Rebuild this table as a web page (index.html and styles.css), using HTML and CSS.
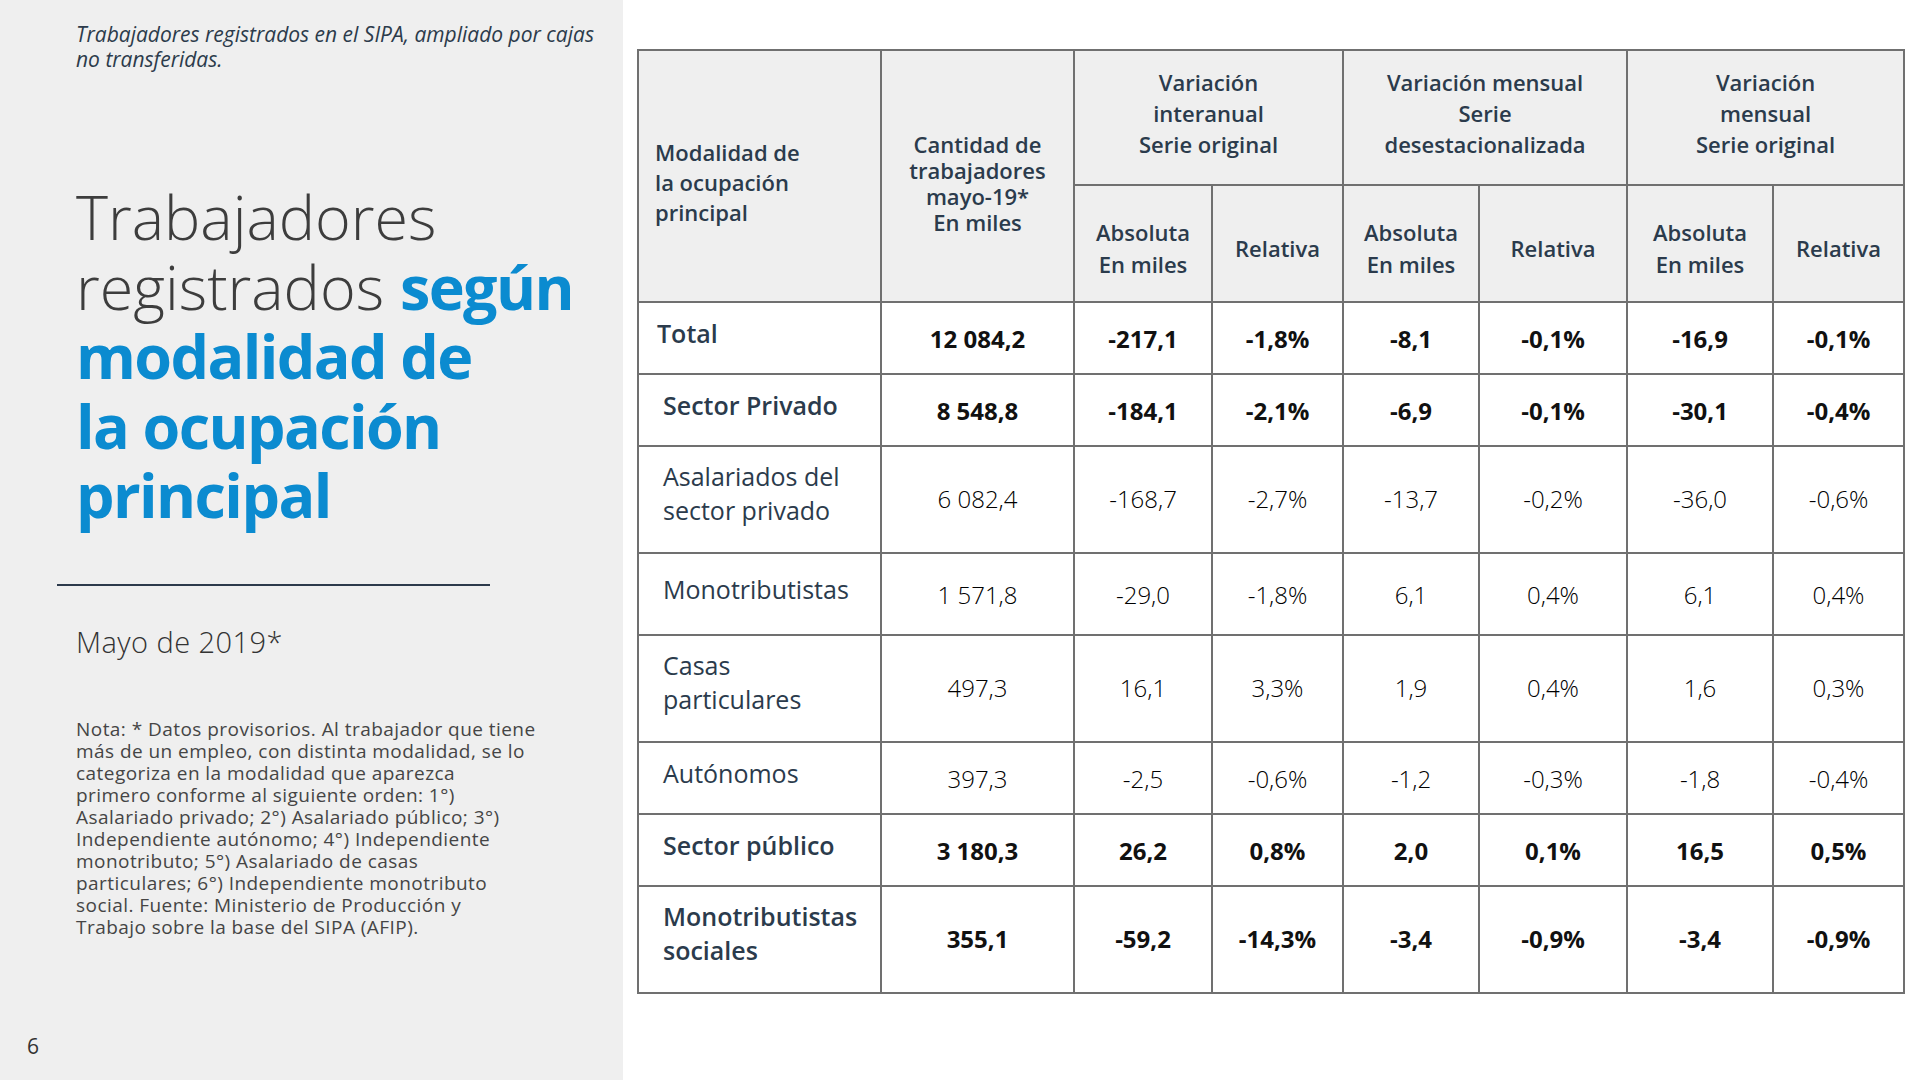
FILE: index.html
```html
<!DOCTYPE html>
<html lang="es">
<head>
<meta charset="utf-8">
<title>Trabajadores registrados según modalidad de la ocupación principal</title>
<link rel="stylesheet" href="styles.css">
</head>
<body>
<div class="slide">
  <aside class="side">
    <p class="subtitle">Trabajadores registrados en el SIPA, ampliado por cajas<br>no transferidas.</p>
    <h1 class="title">Trabajadores<br>registrados <strong>según<br>modalidad de<br>la ocupación<br>principal</strong></h1>
    <hr class="rule">
    <p class="date">Mayo de 2019*</p>
    <p class="note">Nota: * Datos provisorios. Al trabajador que tiene<br>más de un empleo, con distinta modalidad, se lo<br>categoriza en la modalidad que aparezca<br>primero conforme al siguiente orden: 1°)<br>Asalariado privado; 2°) Asalariado público; 3°)<br>Independiente autónomo; 4°) Independiente<br>monotributo; 5°) Asalariado de casas<br>particulares; 6°) Independiente monotributo<br>social. Fuente: Ministerio de Producción y<br>Trabajo sobre la base del SIPA (AFIP).</p>
    <div class="page-num">6</div>
  </aside>
  <main class="content">
    <table class="data">
      <colgroup>
        <col class="c-lab"><col class="c-cant"><col class="c-a1"><col class="c-r1"><col class="c-a2"><col class="c-r2"><col class="c-a3"><col class="c-r3">
      </colgroup>
      <thead>
        <tr class="h-top">
          <th rowspan="2" class="lab-head">Modalidad de<br>la ocupación<br>principal</th>
          <th rowspan="2" class="cant-head">Cantidad de<br>trabajadores<br>mayo-19*<br>En miles</th>
          <th colspan="2" class="grp">Variación<br>interanual<br>Serie original</th>
          <th colspan="2" class="grp">Variación mensual<br>Serie<br>desestacionalizada</th>
          <th colspan="2" class="grp">Variación<br>mensual<br>Serie original</th>
        </tr>
        <tr class="h-sub">
          <th class="sub">Absoluta<br>En miles</th><th class="sub">Relativa</th>
          <th class="sub">Absoluta<br>En miles</th><th class="sub">Relativa</th>
          <th class="sub">Absoluta<br>En miles</th><th class="sub">Relativa</th>
        </tr>
      </thead>
      <tbody>
        <tr class="row single bold"><th class="lab total">Total</th><td>12 084,2</td><td>-217,1</td><td>-1,8%</td><td>-8,1</td><td>-0,1%</td><td>-16,9</td><td>-0,1%</td></tr>
        <tr class="row single bold"><th class="lab">Sector Privado</th><td>8 548,8</td><td>-184,1</td><td>-2,1%</td><td>-6,9</td><td>-0,1%</td><td>-30,1</td><td>-0,4%</td></tr>
        <tr class="row double"><th class="lab">Asalariados del<br>sector privado</th><td>6 082,4</td><td>-168,7</td><td>-2,7%</td><td>-13,7</td><td>-0,2%</td><td>-36,0</td><td>-0,6%</td></tr>
        <tr class="row mid"><th class="lab">Monotributistas</th><td>1 571,8</td><td>-29,0</td><td>-1,8%</td><td>6,1</td><td>0,4%</td><td>6,1</td><td>0,4%</td></tr>
        <tr class="row double"><th class="lab">Casas<br>particulares</th><td>497,3</td><td>16,1</td><td>3,3%</td><td>1,9</td><td>0,4%</td><td>1,6</td><td>0,3%</td></tr>
        <tr class="row single"><th class="lab">Autónomos</th><td>397,3</td><td>-2,5</td><td>-0,6%</td><td>-1,2</td><td>-0,3%</td><td>-1,8</td><td>-0,4%</td></tr>
        <tr class="row single bold"><th class="lab">Sector público</th><td>3 180,3</td><td>26,2</td><td>0,8%</td><td>2,0</td><td>0,1%</td><td>16,5</td><td>0,5%</td></tr>
        <tr class="row double bold"><th class="lab">Monotributistas<br>sociales</th><td>355,1</td><td>-59,2</td><td>-14,3%</td><td>-3,4</td><td>-0,9%</td><td>-3,4</td><td>-0,9%</td></tr>
      </tbody>
    </table>
  </main>
</div>
</body>
</html>
```
FILE: styles.css
```css
* { box-sizing: border-box; }
html, body { margin: 0; padding: 0; }
body {
  width: 1920px;
  height: 1080px;
  background: #ffffff;
  font-family: "Open Sans", "Liberation Sans", sans-serif;
  overflow: hidden;
}
.slide {
  display: flex;
  width: 1920px;
  height: 1080px;
}
.side {
  width: 623px;
  flex: 0 0 623px;
  height: 1080px;
  background: #efefef;
  display: flex;
  flex-direction: column;
  padding: 22px 0 0 76px;
}
.subtitle {
  margin: 0;
  font-style: italic;
  font-weight: 400;
  font-size: 21px;
  line-height: 25px;
  color: #2c3b4b;
}
.title {
  margin: 110px 0 0 0;
  font-weight: 300;
  font-size: 61px;
  line-height: 69.5px;
  color: #3d3d3d;
}
.title strong {
  font-weight: 700;
  color: #0b8bd0;
  letter-spacing: -1.6px;
}
.rule {
  margin: 54px 0 0 -19px;
  width: 433px;
  border: 0;
  border-top: 2px solid #2c3a4b;
  height: 0;
}
.date {
  margin: 38px 0 0 0;
  font-weight: 300;
  font-size: 29px;
  line-height: 36px;
  letter-spacing: 0.45px;
  color: #333333;
}
.note {
  margin: 58px 0 0 0;
  font-weight: 400;
  font-size: 19px;
  line-height: 22px;
  letter-spacing: 0.45px;
  color: #454545;
}
.page-num {
  margin: auto 0 20px -49px;
  font-size: 21px;
  line-height: 28px;
  color: #333;
  font-weight: 400;
}
.content {
  flex: 1;
  padding: 49px 0 0 14px;
}
.data {
  border-collapse: collapse;
  table-layout: fixed;
  width: 1266px;
  border: 2px solid #707070;
}
.data th, .data td {
  border: 2px solid #707070;
  padding: 0;
}
.c-lab { width: 243px; }
.c-cant { width: 193px; }
.c-a1 { width: 138px; }
.c-r1 { width: 131px; }
.c-a2 { width: 136px; }
.c-r2 { width: 148px; }
.c-a3 { width: 146px; }
.c-r3 { width: 131px; }

.data thead th {
  background: #efefef;
  color: #2b3b4c;
  font-weight: 600;
  font-size: 22px;
  text-align: center;
  vertical-align: middle;
}
.h-top { height: 135px; }
.h-sub { height: 117px; }
.data thead th.lab-head {
  text-align: left;
  padding: 12px 0 0 16px;
  line-height: 30px;
}
.data thead th.cant-head { line-height: 26px; padding-top: 14px; }
.data thead th.grp { line-height: 31px; padding-bottom: 8px; }
.data thead th.sub { line-height: 32px; padding-top: 9px; }

.data tbody tr.single { height: 72px; }
.data tbody tr.mid { height: 82px; }
.data tbody tr.double { height: 107px; }
.data tbody th.lab {
  text-align: left;
  font-weight: 500;
  font-size: 25px;
  line-height: 34px;
  color: #2b3b4c;
  padding: 0 0 10px 24px;
  vertical-align: middle;
  background: #fff;
}
.data tbody tr.double th.lab { padding-bottom: 14px; }
.data tbody th.lab.total { padding-left: 18px; }
.data tbody td {
  text-align: center;
  vertical-align: middle;
  font-size: 24px;
  font-weight: 300;
  color: #000;
  padding: 0;
  background: #fff;
}
.data tbody tr.double td { padding-bottom: 2px; }
.data tbody tr.bold th.lab { font-weight: 600; }
.data tbody tr.bold td { font-weight: 700; color: #111; }
```
